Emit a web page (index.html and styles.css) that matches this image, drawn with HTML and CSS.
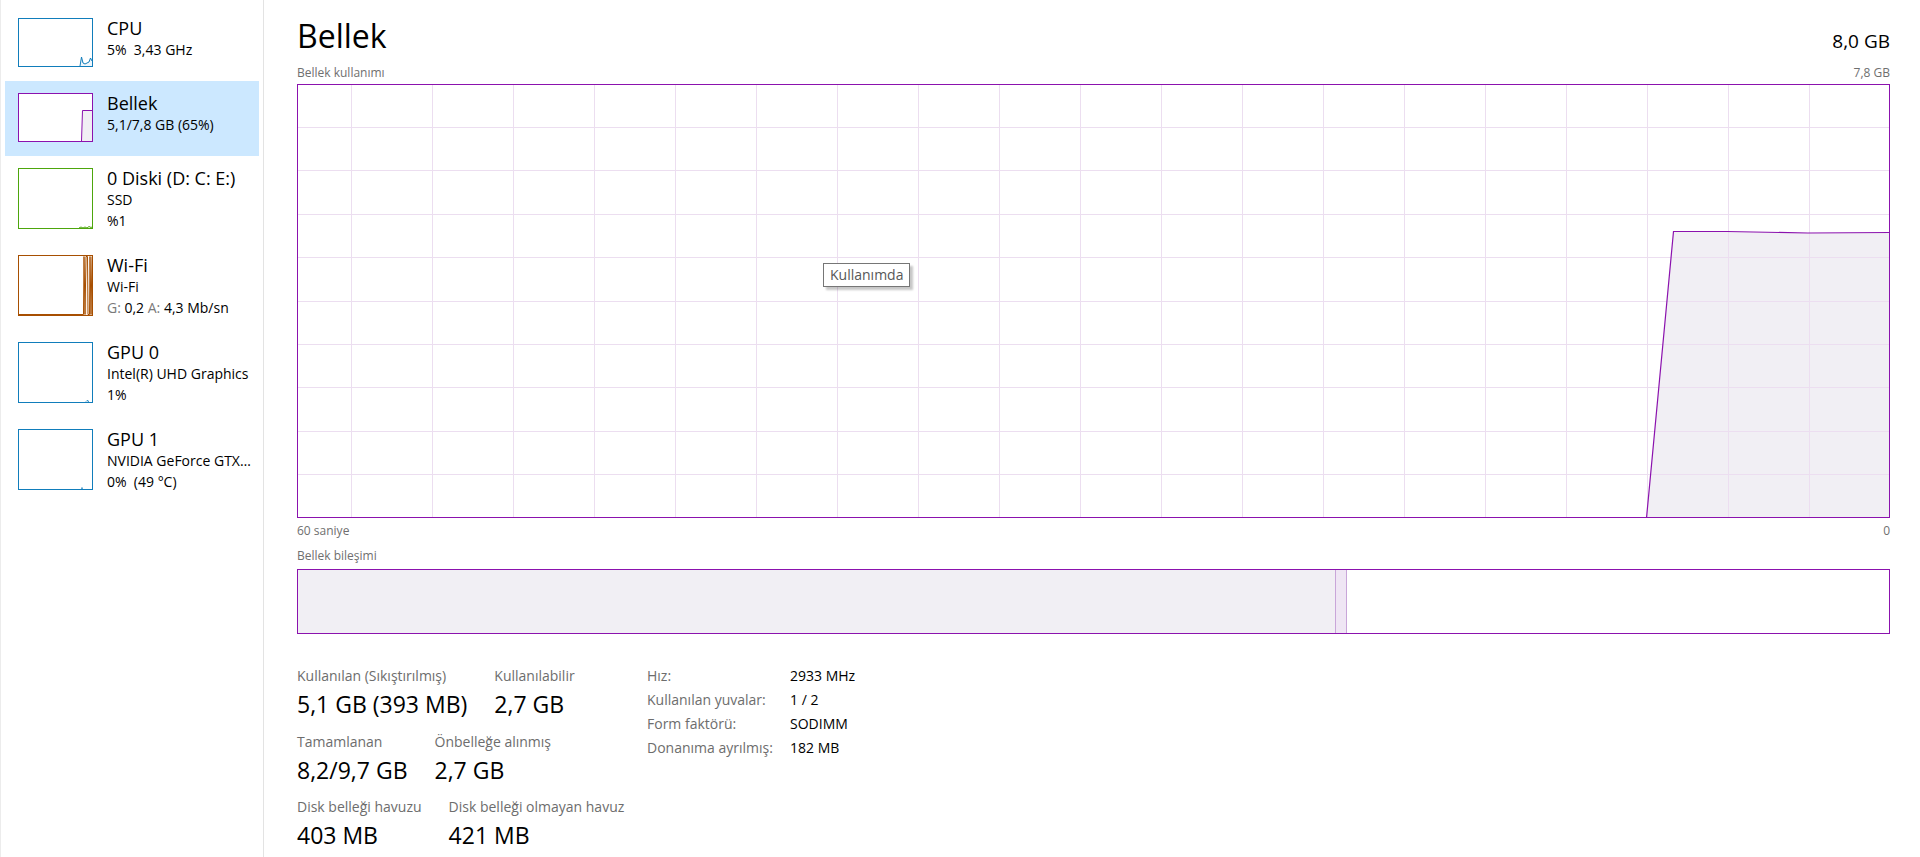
FILE: index.html
```html
<!DOCTYPE html>
<html lang="tr">
<head>
<meta charset="utf-8">
<title>Görev Yöneticisi - Bellek</title>
<link rel="stylesheet" href="styles.css">
</head>
<body>
<div class="app">
  <nav class="sidebar">
    <div class="item">
      <div class="thumb cpu">
        <svg viewBox="0 0 73 47" preserveAspectRatio="none">
          <polygon points="61,47 62.5,38 64,44 66,45 68,44 70,43 71.5,39 73,42 73,47" fill="#eef5fb"/>
          <polyline points="61,47 62.5,38 64,44 66,45 68,44 70,43 71.5,39 73,42" fill="none" stroke="#117dbb" stroke-width="1"/>
        </svg>
      </div>
      <div class="info">
        <div class="name">CPU</div>
        <div class="sub">5%&nbsp; 3,43 GHz</div>
      </div>
    </div>
    <div class="item sel">
      <div class="thumb mem">
        <svg viewBox="0 0 73 47" preserveAspectRatio="none">
          <polygon points="62.5,47 63.5,16.5 73,16.5 73,47" fill="#f1eff4"/>
          <polyline points="62.5,47 63.5,16.5 73,16.5" fill="none" stroke="#8b12ae" stroke-width="1"/>
        </svg>
      </div>
      <div class="info">
        <div class="name">Bellek</div>
        <div class="sub">5,1/7,8 GB (65%)</div>
      </div>
    </div>
    <div class="item tall">
      <div class="thumb disk">
        <svg viewBox="0 0 73 59" preserveAspectRatio="none">
          <polyline points="60,59 62,58 64,59 66,58 68,59 70,57.5 72,58.5 73,58" fill="none" stroke="#4da60c" stroke-width="1"/>
        </svg>
      </div>
      <div class="info">
        <div class="name">0 Diski (D: C: E:)</div>
        <div class="sub">SSD</div>
        <div class="sub">%1</div>
      </div>
    </div>
    <div class="item tall">
      <div class="thumb wifi">
        <svg viewBox="0 0 73 59" preserveAspectRatio="none">
          <polygon points="64.5,59 65,0 66,59 67,0 68.5,0 69,59 70.5,59 71,0 72,59 73,0 73,59" fill="#fbf1e8"/>
          <polyline points="0,58.5 64.5,58.5 65,0.5 66,58.5 67,0.5 68.5,0.5 69,58.5 70.5,58.5 71,0.5 72,58.5 73,0.5" fill="none" stroke="#a74f01" stroke-width="1"/>
        </svg>
      </div>
      <div class="info">
        <div class="name">Wi-Fi</div>
        <div class="sub">Wi-Fi</div>
        <div class="sub"><span class="dim">G:</span> 0,2 <span class="dim">A:</span> 4,3 Mb/sn</div>
      </div>
    </div>
    <div class="item tall">
      <div class="thumb gpu">
        <svg viewBox="0 0 73 59" preserveAspectRatio="none">
          <polyline points="67,58.5 68,57.5 70,58.5" fill="none" stroke="#117dbb" stroke-width="1"/>
        </svg>
      </div>
      <div class="info">
        <div class="name">GPU 0</div>
        <div class="sub">Intel(R) UHD Graphics</div>
        <div class="sub">1%</div>
      </div>
    </div>
    <div class="item tall">
      <div class="thumb gpu">
        <svg viewBox="0 0 73 59" preserveAspectRatio="none">
          <polyline points="62,58.5 63,57.8 64,58.5" fill="none" stroke="#117dbb" stroke-width="1"/>
        </svg>
      </div>
      <div class="info">
        <div class="name">GPU 1</div>
        <div class="sub">NVIDIA GeForce GTX…</div>
        <div class="sub">0%&nbsp; (49 °C)</div>
      </div>
    </div>
  </nav>

  <main class="main">
    <div class="header">
      <h1 class="title">Bellek</h1>
      <div class="total">8,0 GB</div>
    </div>
    <div class="caption">
      <span>Bellek kullanımı</span>
      <span>7,8 GB</span>
    </div>
    <div class="graph">
      <svg viewBox="0 0 1593 434" preserveAspectRatio="none">
        <polygon points="1349.5,434 1376.5,147.5 1430,147.5 1511,149 1593,148.5 1593,434" fill="#f1eff4"/>
        <g stroke="#ecdef0" stroke-width="1">
          <line x1="54.5" y1="0" x2="54.5" y2="434"/>
          <line x1="135.5" y1="0" x2="135.5" y2="434"/>
          <line x1="216.5" y1="0" x2="216.5" y2="434"/>
          <line x1="297.5" y1="0" x2="297.5" y2="434"/>
          <line x1="378.5" y1="0" x2="378.5" y2="434"/>
          <line x1="459.5" y1="0" x2="459.5" y2="434"/>
          <line x1="540.5" y1="0" x2="540.5" y2="434"/>
          <line x1="621.5" y1="0" x2="621.5" y2="434"/>
          <line x1="702.5" y1="0" x2="702.5" y2="434"/>
          <line x1="783.5" y1="0" x2="783.5" y2="434"/>
          <line x1="864.5" y1="0" x2="864.5" y2="434"/>
          <line x1="945.5" y1="0" x2="945.5" y2="434"/>
          <line x1="1026.5" y1="0" x2="1026.5" y2="434"/>
          <line x1="1107.5" y1="0" x2="1107.5" y2="434"/>
          <line x1="1188.5" y1="0" x2="1188.5" y2="434"/>
          <line x1="1269.5" y1="0" x2="1269.5" y2="434"/>
          <line x1="1350.5" y1="0" x2="1350.5" y2="434"/>
          <line x1="1431.5" y1="0" x2="1431.5" y2="434"/>
          <line x1="1512.5" y1="0" x2="1512.5" y2="434"/>
          <line x1="0" y1="43.5" x2="1593" y2="43.5"/>
          <line x1="0" y1="86.5" x2="1593" y2="86.5"/>
          <line x1="0" y1="130.5" x2="1593" y2="130.5"/>
          <line x1="0" y1="173.5" x2="1593" y2="173.5"/>
          <line x1="0" y1="217.5" x2="1593" y2="217.5"/>
          <line x1="0" y1="260.5" x2="1593" y2="260.5"/>
          <line x1="0" y1="303.5" x2="1593" y2="303.5"/>
          <line x1="0" y1="347.5" x2="1593" y2="347.5"/>
          <line x1="0" y1="390.5" x2="1593" y2="390.5"/>
        </g>
        <polyline points="1349.5,434 1376.5,147.5 1430,147.5 1511,149 1593,148.5" fill="none" stroke="#8b12ae" stroke-width="1.2"/>
        <rect x="0.5" y="0.5" width="1592" height="433" fill="none" stroke="#8b12ae" stroke-width="1"/>
      </svg>
      <div class="tip">Kullanımda</div>
    </div>
    <div class="caption axis">
      <span>60 saniye</span>
      <span>0</span>
    </div>
    <div class="caption comp-caption">
      <span>Bellek bileşimi</span>
    </div>
    <div class="composition">
      <div class="seg inuse" style="width:65.18%"></div>
      <div class="seg modified" style="width:0.76%"></div>
      <div class="seg free"></div>
    </div>

    <div class="stats">
      <div class="stats-left">
        <div class="stat-row">
          <div class="stat"><div class="lbl">Kullanılan (Sıkıştırılmış)</div><div class="val">5,1 GB (393 MB)</div></div>
          <div class="stat"><div class="lbl">Kullanılabilir</div><div class="val">2,7 GB</div></div>
        </div>
        <div class="stat-row">
          <div class="stat"><div class="lbl">Tamamlanan</div><div class="val">8,2/9,7 GB</div></div>
          <div class="stat"><div class="lbl">Önbelleğe alınmış</div><div class="val">2,7 GB</div></div>
        </div>
        <div class="stat-row">
          <div class="stat"><div class="lbl">Disk belleği havuzu</div><div class="val">403 MB</div></div>
          <div class="stat"><div class="lbl">Disk belleği olmayan havuz</div><div class="val">421 MB</div></div>
        </div>
      </div>
      <dl class="stats-right">
        <dt>Hız:</dt><dd>2933 MHz</dd>
        <dt>Kullanılan yuvalar:</dt><dd>1 / 2</dd>
        <dt>Form faktörü:</dt><dd>SODIMM</dd>
        <dt>Donanıma ayrılmış:</dt><dd>182 MB</dd>
      </dl>
    </div>
  </main>
</div>
</body>
</html>
```
FILE: styles.css
```css
* { box-sizing: border-box; }
html, body { margin: 0; padding: 0; background: #fff; }
body {
  font-family: "Open Sans", "Noto Sans", sans-serif;
  color: #000;
  width: 1920px;
  height: 857px;
  overflow: hidden;
}
.app { display: flex; height: 857px; }

/* Sidebar */
.sidebar {
  width: 264px;
  flex: none;
  border-left: 1px solid #ececec;
  border-right: 1px solid #e3e3e3;
  padding: 6px 4px 0 4px;
}
.item {
  display: flex;
  align-items: flex-start;
  height: 75px;
  padding: 12px 0 0 13px;
}
.item.tall { height: 87px; }
.item.sel { background: #cce8ff; }
.thumb {
  width: 75px;
  height: 49px;
  flex: none;
  border: 1px solid #117dbb;
  background: #fff;
}
.item.tall .thumb { height: 61px; }
.thumb svg { display: block; width: 100%; height: 100%; }
.thumb.cpu, .thumb.gpu { border-color: #117dbb; }
.thumb.mem { border-color: #8b12ae; }
.thumb.disk { border-color: #4da60c; }
.thumb.wifi { border-color: #a74f01; }
.info { margin-left: 14px; white-space: nowrap; }
.name { font-size: 18px; line-height: 21px; margin-bottom: 1px; }
.sub { font-size: 14px; line-height: 20.5px; }
.dim { color: #7a7a7a; }

/* Main */
.main {
  flex: 1;
  padding: 16px 30px 0 33px;
}
.header {
  display: flex;
  justify-content: space-between;
  align-items: baseline;
  height: 40px;
}
.title {
  margin: 0;
  font-size: 32px;
  line-height: 40px;
  font-weight: 400;
}
.total { font-size: 19px; }
.caption {
  display: flex;
  justify-content: space-between;
  font-size: 12px;
  line-height: 16px;
  color: #6f6f6f;
  margin-top: 9px;
}
.graph {
  position: relative;
  height: 434px;
  margin-top: 3px;
}
.graph svg { display: block; width: 100%; height: 100%; }
.tip {
  position: absolute;
  left: 526px;
  top: 179px;
  border: 1px solid #767676;
  background: #fff;
  font-size: 14px;
  line-height: 20px;
  padding: 1px 6px;
  color: #575757;
  box-shadow: 3px 3px 2px rgba(0, 0, 0, 0.22);
  white-space: nowrap;
}
.caption.axis { margin-top: 5px; }
.caption.comp-caption { margin-top: 9px; }
.composition {
  margin-top: 5px;
  height: 65px;
  border: 1px solid #8b12ae;
  display: flex;
}
.seg { height: 100%; }
.seg.inuse { background: #f1eff4; }
.seg.modified {
  background: #efe6f4;
  border-left: 1px solid #c9a6d9;
  border-right: 1px solid #c9a6d9;
}
.seg.free { flex: 1; background: #fff; }

/* Stats */
.stats {
  display: flex;
  margin-top: 32px;
}
.stats-left { width: 350px; flex: none; }
.stat-row {
  display: flex;
  gap: 27px;
  margin-bottom: 8.5px;
}
.lbl {
  font-size: 14px;
  line-height: 19px;
  color: #6d6d6d;
  white-space: nowrap;
}
.val {
  font-size: 23px;
  line-height: 38px;
  white-space: nowrap;
}
.stats-right {
  margin: -2px 0 0 0;
  display: grid;
  grid-template-columns: 143px auto;
  font-size: 14px;
  line-height: 23.9px;
  align-content: start;
}
.stats-right dt { color: #6d6d6d; }
.stats-right dd { margin: 0; color: #000; }
```
